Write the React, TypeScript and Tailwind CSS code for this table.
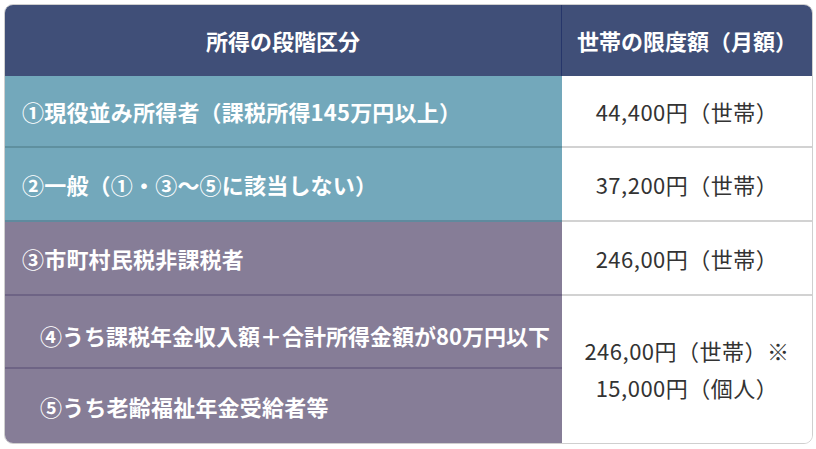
export default function App() {
  const font = { fontFamily: '"Hiragino Sans", "Noto Sans CJK JP", sans-serif' }

  return (
    <div className="w-[816px] h-[449px] bg-white pt-[4px] pl-[4px]" style={font}>
      <div className="w-[809px] h-[440px] rounded-[9px] border border-[#cfcfcf] overflow-hidden grid grid-cols-[557px_1fr] grid-rows-[71px_72px_74px_74px_73px_74px] text-[22px]">
        {/* header */}
        <div className="bg-[#404f78] text-white font-bold flex items-center justify-center border-r border-[#26366a]">
          所得の段階区分
        </div>
        <div className="bg-[#404f78] text-white font-bold flex items-center justify-center">
          世帯の限度額（月額）
        </div>

        {/* row 1 */}
        <div className="bg-[#73a8bb] border-b-2 border-[#5f909f] text-white font-bold flex items-center pl-[17px] tracking-[0.2px]">
          ①現役並み所得者（課税所得145万円以上）
        </div>
        <div className="bg-white border-b-2 border-[#d2d2d2] text-[#333] flex items-center justify-center tracking-[0.5px]">
          44,400円（世帯）
        </div>

        {/* row 2 */}
        <div className="bg-[#73a8bb] border-b-2 border-[#5f8a9e] text-white font-bold flex items-center pl-[17px] tracking-[0.2px]">
          ②一般（①・③〜⑤に該当しない）
        </div>
        <div className="bg-white border-b-2 border-[#d2d2d2] text-[#333] flex items-center justify-center tracking-[0.5px]">
          37,200円（世帯）
        </div>

        {/* row 3 */}
        <div className="bg-[#867d97] border-b-2 border-[#6e6485] text-white font-bold flex items-center pl-[17px] tracking-[0.2px]">
          ③市町村民税非課税者
        </div>
        <div className="bg-white border-b-2 border-[#d2d2d2] text-[#333] flex items-center justify-center tracking-[0.5px]">
          246,00円（世帯）
        </div>

        {/* row 4 */}
        <div className="bg-[#867d97] border-b-2 border-[#6e6485] text-white font-bold flex items-center pl-[35px] pt-[8px]">
          ④うち課税年金収入額＋合計所得金額が80万円以下
        </div>
        <div className="row-span-2 bg-white text-[#333] flex flex-col items-center justify-center leading-[37px] tracking-[0.5px] pb-[2px]">
          <span>246,00円（世帯）※</span>
          <span>15,000円（個人）</span>
        </div>

        {/* row 5 */}
        <div className="bg-[#867d97] text-white font-bold flex items-center pl-[35px] tracking-[0.2px]">
          ⑤うち老齢福祉年金受給者等
        </div>
      </div>
    </div>
  )
}
